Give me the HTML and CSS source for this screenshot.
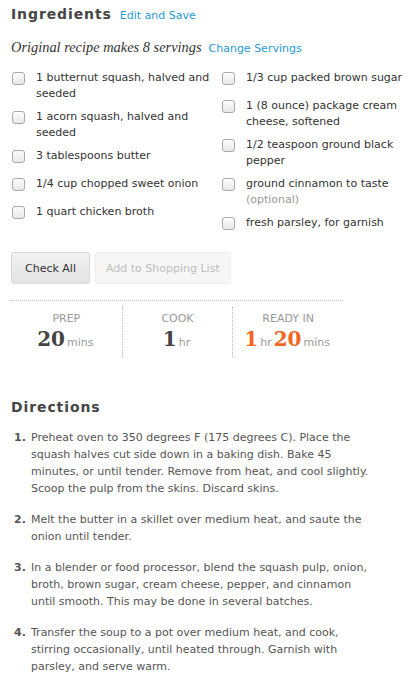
FILE: index.html
```html
<!DOCTYPE html>
<html>
<head>
<meta charset="utf-8">
<link rel="stylesheet" href="styles.css">
</head>
<body>
<div class="page">
  <div class="section-head">
    <h2 class="title">Ingredients</h2>
    <a class="link" href="#">Edit and Save</a>
  </div>
  <div class="servings">
    <span class="servings-text">Original recipe makes 8 servings</span>
    <a class="link" href="#">Change Servings</a>
  </div>
  <div class="ingredients">
    <ul class="col">
      <li class="item"><span class="box"></span><span class="itext">1 butternut squash, halved and seeded</span></li>
      <li class="item"><span class="box"></span><span class="itext">1 acorn squash, halved and seeded</span></li>
      <li class="item"><span class="box"></span><span class="itext">3 tablespoons butter</span></li>
      <li class="item"><span class="box"></span><span class="itext">1/4 cup chopped sweet onion</span></li>
      <li class="item"><span class="box"></span><span class="itext">1 quart chicken broth</span></li>
    </ul>
    <ul class="col">
      <li class="item"><span class="box"></span><span class="itext">1/3 cup packed brown sugar</span></li>
      <li class="item"><span class="box"></span><span class="itext">1 (8 ounce) package cream cheese, softened</span></li>
      <li class="item"><span class="box"></span><span class="itext">1/2 teaspoon ground black pepper</span></li>
      <li class="item"><span class="box"></span><span class="itext">ground cinnamon to taste <span class="opt">(optional)</span></span></li>
      <li class="item"><span class="box"></span><span class="itext">fresh parsley, for garnish</span></li>
    </ul>
  </div>
  <div class="buttons">
    <button class="btn">Check All</button>
    <button class="btn btn-disabled">Add to Shopping List</button>
  </div>
  <div class="times">
    <div class="time">
      <div class="tlabel">PREP</div>
      <div class="tval"><span class="num">20</span><span class="unit">mins</span></div>
    </div>
    <div class="time">
      <div class="tlabel">COOK</div>
      <div class="tval"><span class="num">1</span><span class="unit">hr</span></div>
    </div>
    <div class="time">
      <div class="tlabel">READY IN</div>
      <div class="tval"><span class="num hot">1</span><span class="unit">hr</span><span class="num hot">20</span><span class="unit">mins</span></div>
    </div>
  </div>
  <h2 class="title directions-title">Directions</h2>
  <ol class="steps">
    <li class="step"><span class="snum">1.</span><span class="stext">Preheat oven to 350 degrees F (175 degrees C). Place the squash halves cut side down in a baking dish. Bake 45 minutes, or until tender. Remove from heat, and cool slightly. Scoop the pulp from the skins. Discard skins.</span></li>
    <li class="step"><span class="snum">2.</span><span class="stext">Melt the butter in a skillet over medium heat, and saute the onion until tender.</span></li>
    <li class="step"><span class="snum">3.</span><span class="stext">In a blender or food processor, blend the squash pulp, onion, broth, brown sugar, cream cheese, pepper, and cinnamon until smooth. This may be done in several batches.</span></li>
    <li class="step"><span class="snum">4.</span><span class="stext">Transfer the soup to a pot over medium heat, and cook, stirring occasionally, until heated through. Garnish with parsley, and serve warm.</span></li>
  </ol>
</div>
</body>
</html>
```
FILE: styles.css
```css
html, body {
  margin: 0;
  padding: 0;
  background: #fff;
}
body {
  font-family: "DejaVu Sans", Verdana, sans-serif;
  font-size: 11px;
  color: #333;
}
.page {
  padding: 4px 0 0 11px;
}
.section-head {
  display: flex;
  align-items: baseline;
  gap: 8px;
  height: 20px;
}
.title {
  margin: 0;
  font-size: 14px;
  font-weight: bold;
  letter-spacing: 0.9px;
  color: #454545;
  line-height: 20px;
}
.link {
  color: #1f9ad6;
  text-decoration: none;
  font-size: 11px;
}
.servings {
  display: flex;
  align-items: baseline;
  gap: 7px;
  margin-top: 15px;
  height: 18px;
}
.servings-text {
  font-family: "Liberation Serif", "Times New Roman", serif;
  font-style: italic;
  font-size: 14.4px;
  color: #333;
}
.ingredients {
  display: grid;
  grid-template-columns: 210px 190px;
  margin-top: 13px;
}
.col {
  list-style: none;
  margin: 0;
  padding: 0;
}
.item {
  display: flex;
  align-items: flex-start;
  min-height: 20px;
  margin-bottom: 8px;
  line-height: 15.5px;
}
.box {
  flex: none;
  width: 11px;
  height: 11px;
  margin: 2px 11px 0 1px;
  border: 1px solid #a9a9a9;
  border-radius: 3px;
  background: linear-gradient(#fdfdfd, #e8e8e8);
}
.itext {
  color: #333;
}
.opt {
  color: #999;
}
.buttons {
  display: flex;
  gap: 5px;
  margin-top: 9px;
}
.btn {
  height: 32px;
  font-family: "DejaVu Sans", Verdana, sans-serif;
  font-size: 11px;
  color: #333;
  border: 1px solid #d9d9d9;
  border-radius: 3px;
  background: linear-gradient(#f2f2f2, #e2e2e2);
  padding: 0 13px;
}
.btn-disabled {
  color: #bdbdbd;
  background: #f6f6f6;
  border-color: #eeeeee;
  padding: 0 10px;
}
.times {
  display: grid;
  grid-template-columns: repeat(3, 1fr);
  width: 332px;
  margin-top: 16px;
  border-top: 1px dotted #bbb;
}
.time {
  margin-top: 6px;
  height: 50px;
  text-align: center;
}
.time + .time {
  border-left: 1px dotted #bbb;
}
.tlabel {
  color: #999;
  font-size: 11px;
  margin-top: 5px;
  line-height: 14px;
}
.tval {
  margin-top: 1px;
  line-height: 24px;
}
.num {
  font-family: "DejaVu Serif", Georgia, serif;
  font-weight: bold;
  font-size: 20px;
  color: #444;
}
.num.hot {
  color: #f26522;
}
.unit {
  color: #999;
  font-size: 11px;
  margin-left: 2px;
  margin-right: 2px;
}
.directions-title {
  margin-top: 40px;
}
.steps {
  list-style: none;
  margin: 12px 0 0 0;
  padding: 0 0 0 3px;
}
.step {
  display: flex;
  line-height: 17px;
  margin-bottom: 14px;
  color: #555;
}
.snum {
  flex: none;
  width: 17px;
  font-weight: bold;
  color: #555;
}
.stext {
  width: 342px;
}
```
